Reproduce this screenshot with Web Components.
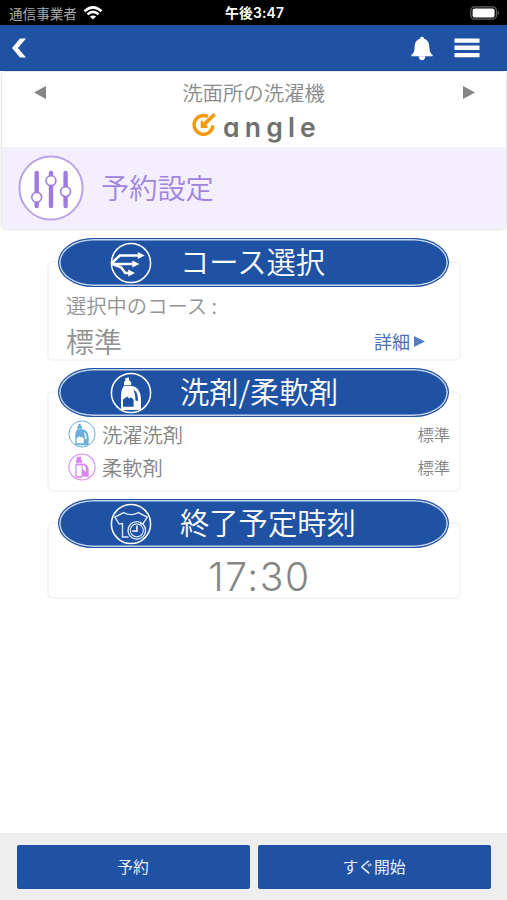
<!DOCTYPE html>
<html lang="ja">
<head>
<meta charset="UTF-8">
<title>予約設定</title>
<style>
    body{
        margin: 0;
        background: #fff;
        font-family: "Noto Sans CJK JP", sans-serif;
    }
</style>
</head>
<body>
<washer-app></washer-app>

<script>
class BaseElement extends HTMLElement {
    constructor() {
        super();
        this.attachShadow({mode: "open"});
    }
    connectedCallback() {
        this.render();
    }
    render(){
        const template = document.createElement("template");
        template.innerHTML = this.getTemplate() + this.getStyles();
        this.shadowRoot.replaceChildren(template.content.cloneNode(true));
    }
}

const icons = {
    wifi: `
        <svg viewBox="0 0 20 14" width="20" height="14" fill="none" stroke="#fff" stroke-width="2.5">
            <path d="M1.4 5.3Q10-2.5 18.6 5.3"/>
            <path d="M4.4 8.4Q10 3.4 15.6 8.4"/>
            <path d="M10 13.6L6.9 10.6Q10 8.2 13.1 10.6Z" fill="#fff" stroke="none"/>
        </svg>`,
    battery: `
        <svg viewBox="0 0 30 14" width="30" height="14">
            <rect x=".8" y=".8" width="25.6" height="12.4" rx="3.8" fill="none" stroke="#666" stroke-width="1.2"/>
            <rect x="2.6" y="2.4" width="22" height="9.2" rx="2.2" fill="#fff"/>
            <path d="M27.8 4.7Q30 7 27.8 9.3Z" fill="#777"/>
        </svg>`,
    back: `
        <svg viewBox="0 0 16 20" width="16" height="20">
            <path d="M9 .5H15L7 10L15 19.5H9L1 10Z" fill="#fff"/>
        </svg>`,
    bell: `
        <svg viewBox="0 0 22 25" width="22" height="25" fill="#fff">
            <path d="M11 .7C12.3.7 13 1.4 13 2.7C17 4 18.3 7.3 18.4 11.4C18.5 15.4 19.4 17.2 21.6 18.8V20.3H.4V18.8C2.6 17.2 3.5 15.4 3.6 11.4C3.7 7.3 5 4 9 2.7C9 1.4 9.7.7 11 .7Z"/>
            <path d="M7.6 20.3H14.4Q13.8 24.3 11 24.3Q8.2 24.3 7.6 20.3Z"/>
        </svg>`,
    menu: `
        <svg viewBox="0 0 26 20" width="26" height="20" fill="#fff">
            <path d="M.5.5H25.5V4.7H.5ZM.5 7.5H25.5V12H.5ZM.5 15H25.5V19.2H.5Z"/>
        </svg>`,
    sliders: `
        <svg viewBox="0 0 66 66" width="66" height="66">
            <circle cx="33" cy="33" r="31.6" fill="#fff" stroke="#b9a3e6" stroke-width="2"/>
            <path d="M18.7 18V51M33 18V51M47.6 18V51" stroke="#9d7be0" stroke-width="4.4" stroke-linecap="round"/>
            <g fill="#fff" stroke="#9d7be0" stroke-width="1.6">
                <circle cx="18.7" cy="42.3" r="4.9"/>
                <circle cx="33" cy="25.7" r="4.9"/>
                <circle cx="47.6" cy="36.6" r="4.9"/>
            </g>
        </svg>`,
    mark: `
        <svg viewBox="0 0 24 24" width="24" height="24" fill="none" stroke="#f39a0b" stroke-width="3.4">
            <path d="M16 3.6A9.4 9.4 0 1 0 20.9 12.4"/>
            <path d="M22.6 1.2L11 12.6" stroke-width="3.6"/>
            <path d="M10 7.8V13.6H15.4" stroke-width="2.6"/>
        </svg>`,
    course: `
        <svg viewBox="0 0 42 42" width="42" height="42" fill="none" stroke="#fff">
            <circle cx="21" cy="21" r="19.6" stroke-width="1.5"/>
            <path d="M1.8 21L9.8 13.5H28.5M1.8 21.9H22.5M1.8 21.9L11 25.2L15.3 31H19.5" stroke-width="2.5"/>
            <path d="M27.8 10L34.7 13.5L27.8 17ZM22.3 18.5L29.4 22L22.3 25.5ZM18.2 27.5L25 31L18.2 34.5Z" fill="#fff" stroke="none"/>
        </svg>`,
    bottle: `
        <svg viewBox="0 0 42 42" width="42" height="42">
            <circle cx="21" cy="21" r="19.6" fill="none" stroke="currentColor" stroke-width="var(--ring, 1.5)"/>
            <path fill="currentColor" fill-rule="evenodd" d="M15.4 6.2L18.8 5.2L19.5 9L21.2 10V13.3H14V10L15.2 9Z
                M13.8 14H22C28 15 31 20.3 31 28V36.5Q31 38 29.3 38H12.5Q11 38 11 36.5V22.8Q11 17.5 13.8 14Z
                M23.2 17.6C24.6 20 25.3 23.4 25.5 28.5L28 29C28 22.5 26.4 19 23.2 17.6Z"/>
            <path d="M13 27.4L17.3 24.4L19.1 26.4L20.9 25.2L23.6 27.8V34.7H13Z" fill="var(--label, #2052a3)"/>
        </svg>`,
    softener: `
        <svg viewBox="0 0 42 42" width="42" height="42">
            <circle cx="21" cy="21" r="19.6" fill="none" stroke="currentColor" stroke-width="1.6"/>
            <path fill="currentColor" fill-rule="evenodd" d="M13 5.6H19.5V10.5H21V14.5H12V10.5H13Z
                M12.2 15.7H22C28 16.2 31 20 31 26V35.5H22L20.5 37.2H12.8L11 35.5V18.5Z
                M22 17.7V24L26.6 28.4V23Q26.2 18.6 22 17.7Z"/>
            <path d="M12.9 18.5H20.5V34.8H12.9Z" fill="#fff"/>
        </svg>`,
    shirt: `
        <svg viewBox="0 0 42 42" width="42" height="42" fill="none" stroke="#dce7fb" stroke-width="1.4">
            <circle cx="21" cy="21" r="19.6" stroke="#fff" stroke-width="1.5"/>
            <path d="M18.5 34H12.5V20.5L9.2 21L4.8 14L13.7 9.6Q21 13.6 28.3 9.6L37.2 14L32.8 21L30 20.5"/>
            <circle cx="26.8" cy="27.4" r="8.8"/>
            <circle cx="26.8" cy="27.4" r="6.5" stroke-width="1.1"/>
            <path d="M26.9 22.6V28.2H22.3" stroke-width="1.8"/>
        </svg>`
};

class UiIcon extends BaseElement {
    getTemplate(){
        return icons[this.getAttribute("name")];
    }
    getStyles(){
        return `
            <style>
                :host{
                    display: block;
                    flex: none;
                }
                svg{
                    display: block;
                    width: var(--size, auto);
                    height: var(--size, auto);
                }
            </style>
        `;
    }
}

class StatusBar extends BaseElement {
    getTemplate(){
        return `
            <div class="carrier"><slot name="carrier"></slot><ui-icon name="wifi"></ui-icon></div>
            <div class="time"><slot name="time"></slot></div>
            <ui-icon class="battery" name="battery"></ui-icon>
        `;
    }
    getStyles(){
        return `
            <style>
                :host{
                    display: grid;
                    grid-template-columns: 1fr auto 1fr;
                    align-items: center;
                    box-sizing: border-box;
                    height: 25px;
                    padding: 0 7px 0 9px;
                    background: #000;
                    color: #fff;
                    line-height: 20px;
                }
                .carrier{
                    display: flex;
                    align-items: center;
                    gap: 6px;
                    color: #aaa;
                    font-size: 13.6px;
                }
                .time{
                    font: 600 13.8px/20px Inter, "Noto Sans CJK JP", sans-serif;
                    letter-spacing: .2px;
                }
                .battery{
                    justify-self: end;
                }
            </style>
        `;
    }
}

class NavBar extends BaseElement {
    getTemplate(){
        return `
            <ui-icon name="back"></ui-icon>
            <div>
                <ui-icon name="bell"></ui-icon>
                <ui-icon name="menu"></ui-icon>
            </div>
        `;
    }
    getStyles(){
        return `
            <style>
                :host{
                    display: flex;
                    align-items: center;
                    justify-content: space-between;
                    box-sizing: border-box;
                    height: 46px;
                    padding: 0 27px 0 11px;
                    background: #2052a3;
                }
                div{
                    display: flex;
                    align-items: center;
                    gap: 21px;
                }
            </style>
        `;
    }
}

class DeviceHeader extends BaseElement {
    getTemplate(){
        return `
            <div class="device">
                <svg viewBox="0 0 12 13" width="12" height="13"><path d="M12 0V13L0 6.5Z"/></svg>
                <div class="name"><slot name="name"></slot></div>
                <svg viewBox="0 0 12 13" width="12" height="13"><path d="M0 0V13L12 6.5Z"/></svg>
            </div>
            <div class="brand"><ui-icon name="mark"></ui-icon><span><slot name="brand"></slot></span></div>
            <div class="title"><ui-icon name="sliders"></ui-icon><div><slot name="title"></slot></div></div>
        `;
    }
    getStyles(){
        return `
            <style>
                :host{
                    display: block;
                    height: 157px;
                    margin: 1px 1px 0 2px;
                    background: #fff;
                    border-radius: 2px 2px 5px 5px;
                    box-shadow: 0 0 3px rgba(0, 0, 0, .25);
                    overflow: hidden;
                }
                .device{
                    display: flex;
                    align-items: center;
                    justify-content: space-between;
                    height: 41px;
                    padding: 0 31px 0 32px;
                    color: #8a8a8a;
                }
                .device svg{
                    fill: #858585;
                }
                .name{
                    margin: -1px 2px 0 0;
                    font-size: 20.4px;
                    font-weight: 350;
                    line-height: 30px;
                }
                .brand{
                    display: flex;
                    align-items: center;
                    height: 34px;
                    padding-left: 190px;
                    gap: 7px;
                    color: #707070;
                }
                .brand ui-icon{
                    margin-top: -11px;
                }
                .brand span{
                    margin-top: -7px;
                    font: 600 26.5px/34px Inter, sans-serif;
                    font-feature-settings: "cv11";
                    letter-spacing: 5.2px;
                }
                .title{
                    display: flex;
                    align-items: center;
                    height: 82px;
                    padding-left: 16px;
                    gap: 17px;
                    background: #f4effe;
                    color: #a084de;
                    font-size: 28.2px;
                    font-weight: 350;
                }
                .title div{
                    margin-top: -3px;
                }
            </style>
        `;
    }
}

class SettingCard extends BaseElement {
    getTemplate(){
        return `
            <header><ui-icon name="${this.getAttribute("icon")}"></ui-icon><slot name="heading"></slot></header>
            <section><slot></slot></section>
        `;
    }
    getStyles(){
        return `
            <style>
                :host{
                    display: block;
                    box-sizing: border-box;
                    border: 2px solid #f5f5f5;
                    border-radius: 6px;
                }
                header{
                    display: flex;
                    align-items: center;
                    box-sizing: border-box;
                    height: 49px;
                    margin: -25px 10px 0 9px;
                    padding-left: 51px;
                    gap: 28px;
                    border: 1px solid #2052a3;
                    border-radius: 35px / 24.5px;
                    background: #2052a3;
                    box-shadow: inset 0 0 0 1.6px #c4d3ec;
                    color: #fff;
                    font-size: 29.3px;
                    font-weight: 350;
                    line-height: 43px;
                }
                ::slotted([slot="heading"]){
                    margin-top: -4px;
                }
                section{
                    padding: 0 9px 0 17px;
                }
            </style>
        `;
    }
}

class CourseSummary extends BaseElement {
    getTemplate(){
        return `
            <div class="label"><slot name="label"></slot></div>
            <div class="row">
                <div class="value"><slot name="value"></slot></div>
                <div class="link">
                    <slot name="link"></slot>
                    <svg viewBox="0 0 11 11" width="11" height="11"><path d="M0 0L11 5.5L0 11Z"/></svg>
                </div>
            </div>
        `;
    }
    getStyles(){
        return `
            <style>
                :host{
                    display: block;
                    color: #929292;
                    font-weight: 350;
                }
                .label{
                    padding-top: 3px;
                    font-size: 20.3px;
                    line-height: 30px;
                }
                .row{
                    display: flex;
                    align-items: center;
                    justify-content: space-between;
                    height: 42px;
                    padding-right: 25px;
                }
                .value{
                    font-size: 28px;
                }
                .link{
                    display: flex;
                    align-items: center;
                    gap: 4px;
                    color: #4872b5;
                    font-size: 18px;
                    font-weight: 400;
                }
                svg{
                    fill: #5580bd;
                }
            </style>
        `;
    }
}

class DoseRow extends BaseElement {
    getTemplate(){
        return `
            <ui-icon name="${this.getAttribute("icon")}"></ui-icon>
            <div class="name"><slot name="name"></slot></div>
            <div class="amount"><slot name="amount"></slot></div>
        `;
    }
    getStyles(){
        return `
            <style>
                :host{
                    --size: 28px;
                    --label: #fff;
                    display: flex;
                    align-items: center;
                    height: 32.5px;
                    padding-left: 2px;
                    color: #858585;
                    font-size: 20.3px;
                    font-weight: 350;
                }
                :host([icon="bottle"]){
                    padding-top: 1px;
                }
                :host([icon="bottle"]) ui-icon{
                    color: #68afd9;
                }
                :host([icon="softener"]) ui-icon{
                    color: #dc85ee;
                }
                .name{
                    flex: 1;
                    padding-left: 6px;
                }
                .amount{
                    font-size: 16.3px;
                }
            </style>
        `;
    }
}

class FinishTime extends BaseElement {
    getTemplate(){
        return `<slot></slot>`;
    }
    getStyles(){
        return `
            <style>
                :host{
                    display: block;
                    padding: 9px 0 0 3px;
                    color: #858585;
                    font: 300 39px/40px Inter, sans-serif;
                    letter-spacing: 1.6px;
                    text-align: center;
                }
            </style>
        `;
    }
}

class ActionButton extends BaseElement {
    getTemplate(){
        return `<button type="button"><slot></slot></button>`;
    }
    getStyles(){
        return `
            <style>
                :host{
                    display: block;
                    flex: 1;
                }
                button{
                    display: block;
                    width: 100%;
                    height: 44px;
                    padding: 0 1px 2px 0;
                    border: 0;
                    border-radius: 2px;
                    background: #2052a3;
                    color: #e8effb;
                    font: inherit;
                    font-size: 15.8px;
                }
            </style>
        `;
    }
}

class WasherApp extends BaseElement {
    getTemplate(){
        return `
            <status-bar>
                <span slot="carrier">通信事業者</span>
                <span slot="time">午後3:47</span>
            </status-bar>
            <nav-bar></nav-bar>
            <device-header>
                <span slot="name">洗面所の洗濯機</span>
                <span slot="brand">angle</span>
                <span slot="title">予約設定</span>
            </device-header>
            <main>
                <setting-card class="course" icon="course">
                    <span slot="heading">コース選択</span>
                    <course-summary>
                        <span slot="label">選択中のコース :</span>
                        <span slot="value">標準</span>
                        <span slot="link">詳細</span>
                    </course-summary>
                </setting-card>
                <setting-card class="dose" icon="bottle">
                    <span slot="heading">洗剤/柔軟剤</span>
                    <dose-row icon="bottle">
                        <span slot="name">洗濯洗剤</span>
                        <span slot="amount">標準</span>
                    </dose-row>
                    <dose-row icon="softener">
                        <span slot="name">柔軟剤</span>
                        <span slot="amount">標準</span>
                    </dose-row>
                </setting-card>
                <setting-card class="finish" icon="shirt">
                    <span slot="heading">終了予定時刻</span>
                    <finish-time>17:30</finish-time>
                </setting-card>
            </main>
            <footer>
                <action-button>予約</action-button>
                <action-button>すぐ開始</action-button>
            </footer>
        `;
    }
    getStyles(){
        return `
            <style>
                :host{
                    display: flex;
                    flex-direction: column;
                    height: 900px;
                    overflow: hidden;
                }
                main{
                    flex: 1;
                    display: flex;
                    flex-direction: column;
                    gap: 30px;
                    padding: 32px 46px 0 47px;
                }
                .course{
                    height: 100px;
                }
                .dose{
                    height: 101px;
                }
                .finish{
                    height: 77px;
                }
                footer{
                    display: flex;
                    gap: 8px;
                    box-sizing: border-box;
                    height: 67px;
                    padding: 12px 16px 0 17px;
                    background: #eee;
                }
            </style>
        `;
    }
}

customElements.define("ui-icon", UiIcon);
customElements.define("status-bar", StatusBar);
customElements.define("nav-bar", NavBar);
customElements.define("device-header", DeviceHeader);
customElements.define("setting-card", SettingCard);
customElements.define("course-summary", CourseSummary);
customElements.define("dose-row", DoseRow);
customElements.define("finish-time", FinishTime);
customElements.define("action-button", ActionButton);
customElements.define("washer-app", WasherApp);
</script>
</body>
</html>
